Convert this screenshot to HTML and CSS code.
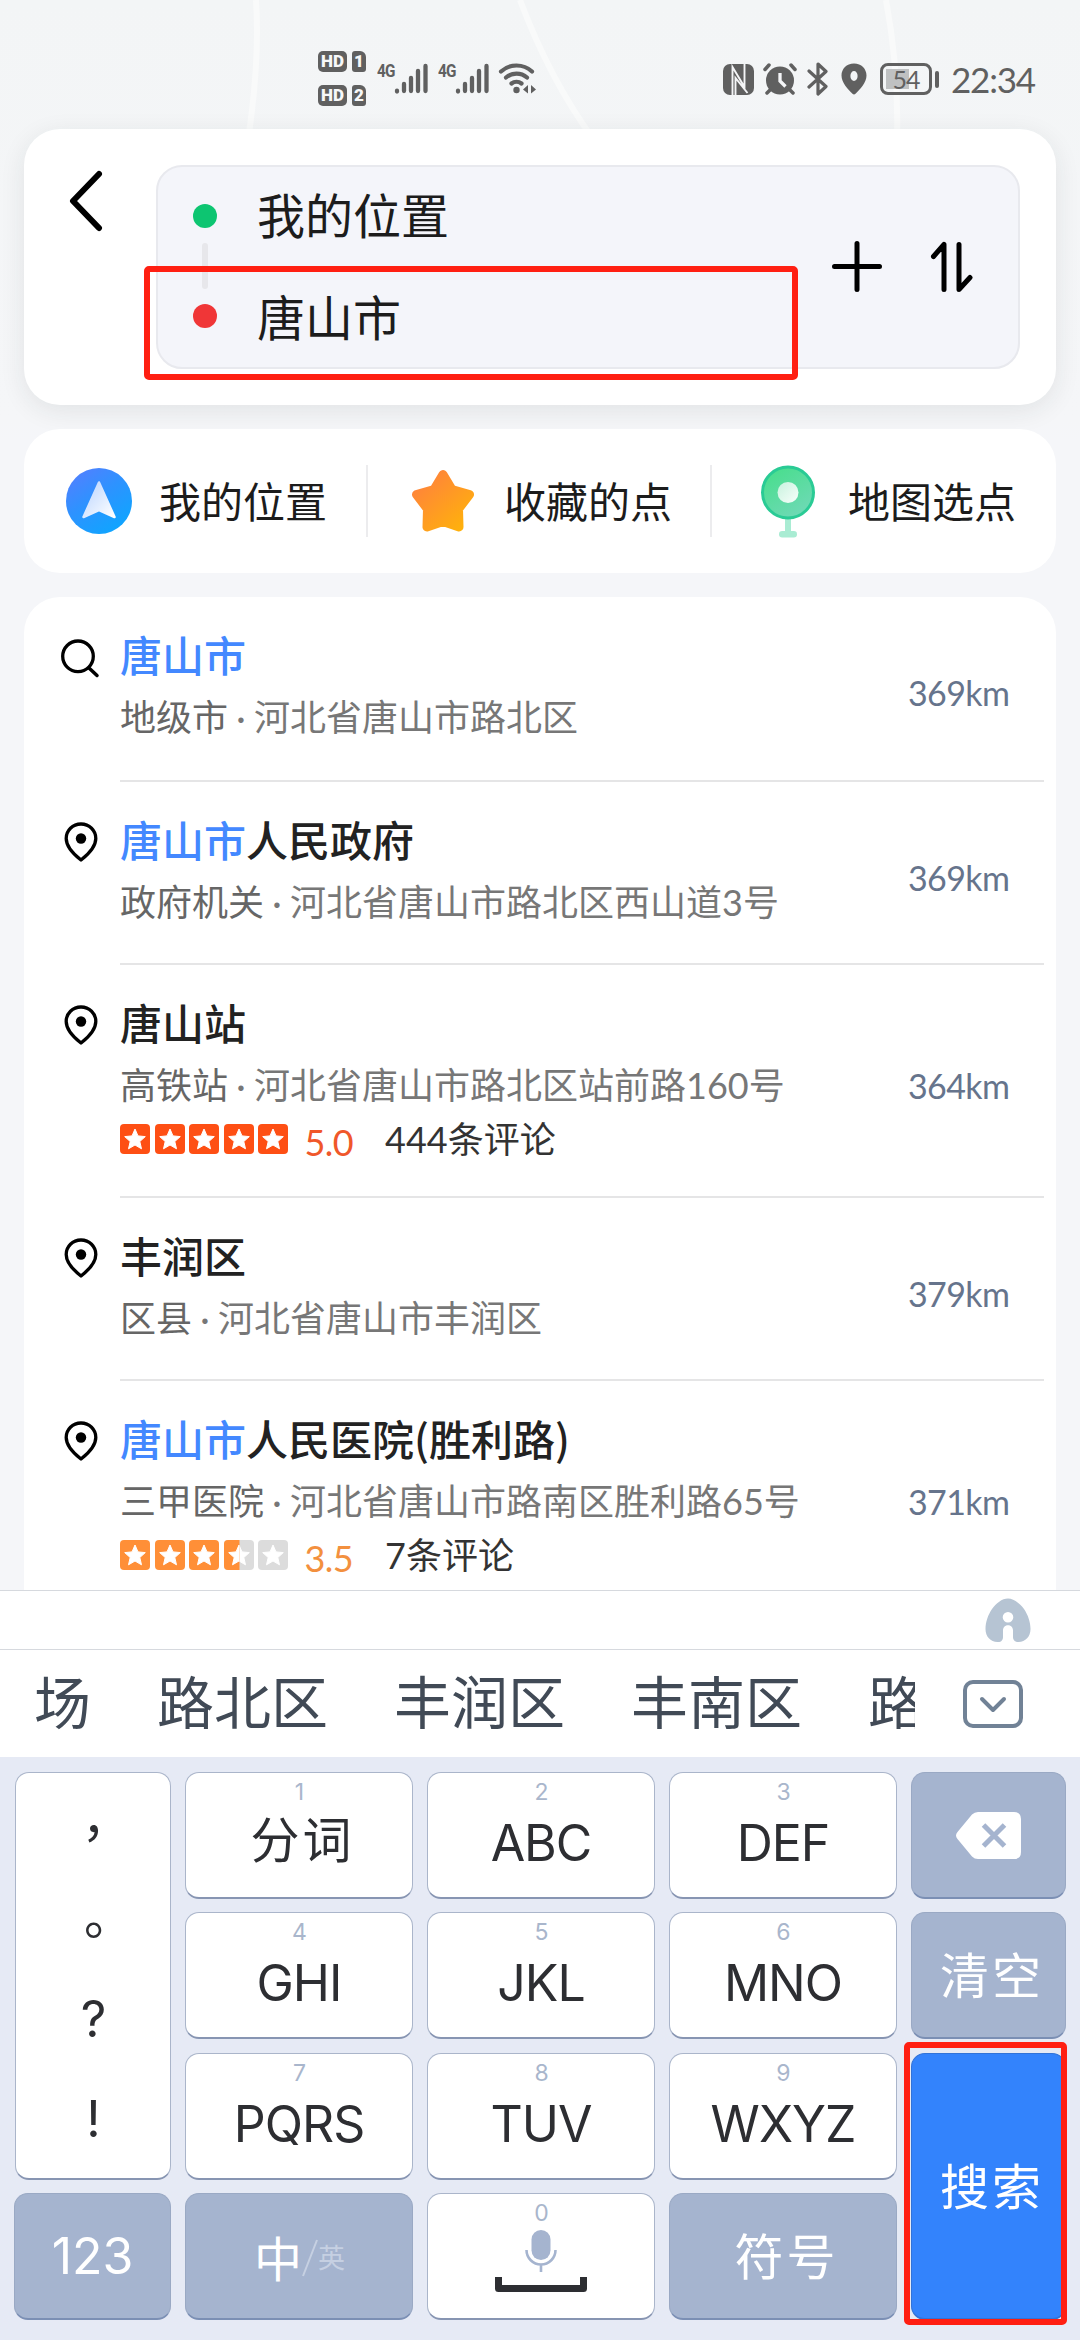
FILE: index.html
```html
<!DOCTYPE html>
<html lang="zh-CN">
<head>
<meta charset="utf-8">
<title>路线搜索</title>
<link rel="stylesheet" href="styles.css">
</head>
<body>
<svg class="defs" width="0" height="0" aria-hidden="true">
  <defs>
    <linearGradient id="gBlue" x1="0" y1="0" x2="0.7" y2="1"><stop offset="0" stop-color="#5a7cff"/><stop offset="0.5" stop-color="#2e92ff"/><stop offset="1" stop-color="#0fa5ff"/></linearGradient>
    <linearGradient id="gArrow" x1="0" y1="0" x2="1" y2="1"><stop offset="0" stop-color="#b9d4ff"/><stop offset="1" stop-color="#ffffff"/></linearGradient>
    <linearGradient id="gStar" x1="0" y1="0" x2="0.9" y2="1"><stop offset="0.1" stop-color="#ff843a"/><stop offset="1" stop-color="#ffb10c"/></linearGradient>
    <linearGradient id="gGreen" x1="0.2" y1="0" x2="0.8" y2="1"><stop offset="0" stop-color="#48de8c"/><stop offset="1" stop-color="#71d9b8"/></linearGradient>
    <linearGradient id="gDot" x1="0" y1="0" x2="1" y2="1"><stop offset="0" stop-color="#c8f2de"/><stop offset="1" stop-color="#f8fffb"/></linearGradient>
    <symbol id="pin" viewBox="0 0 34 40"><path d="M17 2C8.6 2 2.2 8.4 2.2 16.4 2.2 25 9.400 32 17 38c7.600-6 14.800-13 14.800-21.600C31.800 8.400 25.400 2 17 2z" fill="none" stroke="#000" stroke-width="3.300" stroke-linejoin="round"/><circle cx="17" cy="16.500" r="5.200"/></symbol>
    <symbol id="star" viewBox="0 0 30 30"><rect width="30" height="30" rx="4" fill="currentColor"/><path d="M15 5l3 6.900 7.300.7-5.500 4.900 1.700 7.300L15 21l-6.500 3.800 1.700-7.300-5.500-4.900 7.300-.7z" fill="#fff" stroke="#fff" stroke-width="1" stroke-linejoin="round"/></symbol>
    <symbol id="signal" viewBox="0 0 34 32"><path d="M3 29.500v-.8M10 29v-7M17 29v-13M24 29v-20M31.500 29V4" stroke="#606060" stroke-width="4.300" stroke-linecap="round"/></symbol>
  </defs>
</svg>

<div class="screen">
  <svg class="map" width="1080" height="440" viewBox="0 0 1080 440" fill="none" stroke="#f9fafa" stroke-width="6" aria-hidden="true"><path d="M256 0Q260 60 248 140M520 0Q550 80 594 140M886 0Q899 70 897 140"/></svg>

  <header class="status">
    <div class="sims">
      <div class="sim"><b class="hd">HD</b><b class="slot">1</b></div>
      <div class="sim"><b class="hd">HD</b><b class="slot">2</b></div>
    </div>
    <div class="net net-a"><span>4G</span><svg width="34" height="32"><use href="#signal"/></svg></div>
    <div class="net"><span>4G</span><svg width="34" height="32"><use href="#signal"/></svg></div>
    <svg class="wifi" width="40" height="32" viewBox="0 0 40 32"><g fill="none" stroke="#606060" stroke-width="4.200" stroke-linecap="round"><path d="M3 9.500a23 23 0 0 1 31 0M8 15.500a16 16 0 0 1 21 0M13.500 21.500a8 8 0 0 1 10 0"/></g><circle cx="18.500" cy="28" r="3.200" fill="#606060"/><path d="M30 23v8.500l-5-4zM33 23v8.500l5-4z" fill="#606060"/></svg>
    <div class="status-right">
      <svg width="31" height="31" viewBox="0 0 31 31"><rect width="31" height="31" rx="7" fill="#606060"/><path d="M9.500 31V3l12 20V0M12.500 31V14l12 15" fill="none" stroke="#f4f5f7" stroke-width="1.900"/></svg>
      <svg class="alarm" width="34" height="32" viewBox="0 0 34 32"><circle cx="17" cy="17.500" r="14" fill="#606060"/><path d="M2 6.500l4-4.500M32 6.500L28 2M7 27l-3 3M27 27l3 3" stroke="#606060" stroke-width="3.500" stroke-linecap="round"/><path d="M17 10v8l5.500 5.500" fill="none" stroke="#f4f5f7" stroke-width="3.300"/></svg>
      <svg class="bt" width="22" height="34" viewBox="0 0 22 34"><path d="M2 9l17 15.500-8 7.500V2l8 7.500L2 25" fill="none" stroke="#606060" stroke-width="3.200" stroke-linejoin="round" stroke-linecap="round"/></svg>
      <svg class="loc" width="26" height="32" viewBox="0 0 26 32"><path fill-rule="evenodd" d="M13 0.500C5.500.5.500 6 .5 12.500.500 20 7 26 11.500 30.800q1.500 1.500 3 0C19 26 25.500 20 25.500 12.500 25.500 6 20.500.5 13 .5zm0 7.500a3.600 5 0 1 1 0 10 3.600 5 0 1 1 0-10z" fill="#606060"/></svg>
      <div class="battery"><span>54</span></div><i class="battery-cap"></i>
      <time>22:34</time>
    </div>
  </header>

  <section class="route">
    <svg class="back" width="34" height="62" viewBox="0 0 34 62"><path d="M30 4L4 31l26 27" fill="none" stroke="#000" stroke-width="6" stroke-linecap="round" stroke-linejoin="round"/></svg>
    <div class="route-box">
      <div class="marks"><i class="dot start"></i><i class="link"></i><i class="dot end"></i></div>
      <div class="places"><p>我的位置</p><p>唐山市</p></div>
      <svg class="plus" width="50" height="51" viewBox="0 0 50 51"><path d="M25 2.500v46M2.500 25.500h45" stroke="#000" stroke-width="5" stroke-linecap="round"/></svg>
      <svg class="swap" width="44" height="52" viewBox="0 0 44 52"><path d="M3.500 15.500L14 3.500v45M29 3.500v45l11-12" fill="none" stroke="#000" stroke-width="5" stroke-linecap="round" stroke-linejoin="round"/></svg>
    </div>
    <i class="mark mark-place"></i>
  </section>

  <nav class="quick">
    <a class="q-me"><svg width="66" height="66" viewBox="0 0 66 66"><circle cx="33" cy="33" r="33" fill="url(#gBlue)"/><path d="M33 14.500L48.500 49 33 42 17.500 49z" fill="url(#gArrow)" stroke="url(#gArrow)" stroke-width="2.500" stroke-linejoin="round"/></svg><span>我的位置</span></a>
    <a class="q-fav"><svg width="66" height="66" viewBox="0 0 66 66"><path d="M33 6.500L42 21.500 59.500 26.500 48.500 41 49 59 33 53.500 17 59 17.500 41 6.500 26.500 24 21.500z" fill="url(#gStar)" stroke="url(#gStar)" stroke-width="9" stroke-linejoin="round"/></svg><span>收藏的点</span></a>
    <a class="q-map"><svg width="56" height="74" viewBox="0 0 56 74"><path d="M28 52v18" stroke="#a9ecd3" stroke-width="6"/><rect x="19" y="67" width="18" height="6.500" rx="3.200" fill="#a9ecd3"/><circle cx="28" cy="28.500" r="25.500" fill="url(#gGreen)" stroke="#2acb95" stroke-width="3"/><circle cx="28" cy="28.500" r="10.500" fill="url(#gDot)"/></svg><span>地图选点</span></a>
  </nav>

  <main class="results">
    <article class="row first">
      <svg class="search" width="40" height="40" viewBox="0 0 40 40"><circle cx="18" cy="18.300" r="15.300" fill="none" stroke="#000" stroke-width="3.300"/><path d="M29 30l8 7.500" stroke="#000" stroke-width="3.500" stroke-linecap="round"/></svg>
      <div class="body"><div class="info"><h2><em>唐山市</em></h2><p class="addr"><b>地级市</b><i>·</i>河北省唐山市路北区</p></div><span class="dist">369km</span></div>
    </article>
    <article class="row">
      <svg class="pin" width="34" height="40"><use href="#pin"/></svg>
      <div class="body"><div class="info"><h2><em>唐山市</em>人民政府</h2><p class="addr"><b>政府机关</b><i>·</i>河北省唐山市路北区西山道3号</p></div><span class="dist">369km</span></div>
    </article>
    <article class="row">
      <svg class="pin" width="34" height="40"><use href="#pin"/></svg>
      <div class="body"><div class="info"><h2>唐山站</h2><p class="addr"><b>高铁站</b><i>·</i>河北省唐山市路北区站前路160号</p>
        <div class="rating top"><svg><use href="#star"/></svg><svg><use href="#star"/></svg><svg><use href="#star"/></svg><svg><use href="#star"/></svg><svg><use href="#star"/></svg><strong>5.0</strong><span>444条评论</span></div></div><span class="dist">364km</span></div>
    </article>
    <article class="row">
      <svg class="pin" width="34" height="40"><use href="#pin"/></svg>
      <div class="body"><div class="info"><h2>丰润区</h2><p class="addr"><b>区县</b><i>·</i>河北省唐山市丰润区</p></div><span class="dist">379km</span></div>
    </article>
    <article class="row">
      <svg class="pin" width="34" height="40"><use href="#pin"/></svg>
      <div class="body"><div class="info"><h2><em>唐山市</em>人民医院(胜利路)</h2><p class="addr"><b>三甲医院</b><i>·</i>河北省唐山市路南区胜利路65号</p>
        <div class="rating mid"><svg><use href="#star"/></svg><svg><use href="#star"/></svg><svg><use href="#star"/></svg><span class="half"><svg class="off"><use href="#star"/></svg><svg class="on"><use href="#star"/></svg></span><svg class="off"><use href="#star"/></svg><strong>3.5</strong><span>7条评论</span></div></div><span class="dist">371km</span></div>
    </article>
  </main>

  <section class="ime">
    <div class="toolbar"><svg width="46" height="45" viewBox="0 0 46 45"><path fill-rule="evenodd" d="M23 .5C17 .5 11 5.500 7 11 3 17 .5 24 .5 31c0 8 5 12.500 12 13 4 .2 5.500-2 5.500-5v-6.500c0-7 10-7 10 0V39c0 3 2 5.200 5.500 5 7-.5 12-5 12-13 0-7-2.500-14-6.500-20C35 5.500 29 .5 23 .5zM23 14a5.300 5.300 0 1 1 0 10.600A5.300 5.300 0 0 1 23 14z" fill="#b6c4d3"/></svg></div>
    <div class="candidates">
      <div class="words"><span>场</span><span>路北区</span><span>丰润区</span><span>丰南区</span><span>路</span></div>
      <svg width="60" height="48" viewBox="0 0 60 48" fill="none" stroke="#718296" stroke-width="4"><rect x="2" y="2" width="56" height="44" rx="8"/><path d="M19 19l11 11 11-11" stroke-linecap="round" stroke-linejoin="round"/></svg>
    </div>
    <div class="keys">
      <div class="key punct"><span class="cn">，</span><span class="cn">。</span><span>?</span><span>!</span></div>
      <div class="key"><small>1</small><span class="cjk">分词</span></div>
      <div class="key"><small>2</small><span>ABC</span></div>
      <div class="key"><small>3</small><span>DEF</span></div>
      <div class="key fn"><svg class="del" width="66" height="47" viewBox="0 0 66 47"><path d="M22 0h36q7 0 7 7v33q0 7-7 7H22q-3.500 0-6-2.500L1.500 27q-3-3.500 0-7L16 2.500Q18.500 0 22 0z" fill="#fff"/><path d="M27.500 13l21 21M48.500 13l-21 21" stroke="#a5b4cf" stroke-width="5"/></svg></div>
      <div class="key"><small>4</small><span>GHI</span></div>
      <div class="key"><small>5</small><span>JKL</span></div>
      <div class="key"><small>6</small><span>MNO</span></div>
      <div class="key fn"><span class="cjk">清空</span></div>
      <div class="key"><small>7</small><span>PQRS</span></div>
      <div class="key"><small>8</small><span>TUV</span></div>
      <div class="key"><small>9</small><span>WXYZ</span></div>
      <div class="key go"><span class="cjk">搜索</span><i class="mark mark-go"></i></div>
      <div class="key fn"><span class="num">123</span></div>
      <div class="key fn lang"><span class="cjk">中</span><svg width="16" height="38" viewBox="0 0 16 38"><path d="M1 37L15 1" stroke="#c6d0e2" stroke-width="2"/></svg><span class="alt">英</span></div>
      <div class="key space"><small>0</small><svg width="92" height="64" viewBox="0 0 92 64"><rect x="36.500" y="0" width="19" height="30" rx="9.500" fill="#a5b4cf"/><path d="M31.500 20a14.500 14.500 0 0 0 29 0M46 34v8" fill="none" stroke="#a5b4cf" stroke-width="2.600"/><path d="M3.500 47v11.500h85V47" fill="none" stroke="#2d2e32" stroke-width="7" stroke-linejoin="round"/></svg></div>
      <div class="key fn"><span class="cjk">符号</span></div>
    </div>
  </section>
</div>
</body>
</html>
```
FILE: styles.css
```css
* { box-sizing: border-box; }
body, p, h2 { margin: 0; }
body { font-family: "Noto Sans CJK SC", sans-serif; color: #1c1c1c; }
i, em { font-style: normal; }
svg { display: block; flex: none; }
.defs { position: absolute; }

.screen {
  position: relative;
  width: 1080px; height: 2340px;
  overflow: hidden;
  display: flex; flex-direction: column;
  background: linear-gradient(#f3f5f6, #f5f6f8 420px, #f5f6f9 440px);
}
.map { position: absolute; left: 0; top: 0; }

/* status bar */
.status { position: relative; flex: none; height: 129px; padding: 51px 45px 0 318px; display: flex; align-items: flex-start; color: #606060; }
.sims { display: flex; flex-direction: column; gap: 13px; width: 49px; }
.sim { display: flex; gap: 5px; font: 700 17px/21px "Roboto", sans-serif; color: #f7f8f9; }
.hd { width: 29px; height: 21px; border-radius: 5px; background: #606060; text-align: center; }
.slot { width: 14px; height: 21px; border-radius: 3px 6px 3px 3px; background: #606060; text-align: center; }
.net { display: flex; margin: 11px 0 0 10px; width: 51px; }
.net span { width: 17px; font: 700 18px/18px "Roboto", sans-serif; letter-spacing: -1px; transform: scaleX(.85); transform-origin: left; }
.wifi { margin: 11px 0 0 9px; }
.status-right { margin: 11px 0 0 auto; display: flex; align-items: center; }
.alarm { margin-left: 9px; }
.bt { margin-left: 10px; }
.loc { margin-left: 12px; }
.battery { margin-left: 13px; width: 52px; height: 32px; border: 3px solid #606060; border-radius: 8px; background: linear-gradient(90deg, #bfc1c2 52%, transparent 52%) 3px 3px / 44px 20px no-repeat; font: 400 25px/26px "Lato", sans-serif; text-align: center; letter-spacing: -1px; }
.battery-cap { width: 4px; height: 17px; margin: 0 0 0 3px; border-radius: 2px; background: #606060; }
.status time { margin-left: 12px; width: 84px; white-space: nowrap; font: 400 35px/32px "Lato", sans-serif; letter-spacing: -1.200px; }

/* route card */
.route { position: relative; flex: none; height: 276px; margin: 0 24px; padding: 36px; border-radius: 36px; background: #fff; box-shadow: 0 6px 26px rgba(30, 40, 40, .09); display: flex; }
.back { margin: 5px 0 0 9px; }
.route-box { margin-left: 53px; width: 864px; height: 204px; border: 2px solid #e8e9ee; border-radius: 26px; background: #f4f5fa; display: flex; }
.marks { width: 24px; margin: 37px 0 0 35px; display: flex; flex-direction: column; align-items: center; }
.dot { width: 24px; height: 24px; border-radius: 50%; }
.start { background: #0dc571; }
.end { background: #f03637; }
.link { width: 6px; height: 46px; margin: 15px 0 15px; border-radius: 3px; background: #e7e7eb; }
.places { width: 573px; padding: 0 0 0 40px; }
.places p { height: 102px; font-size: 48px; line-height: 102px; margin-top: -5px; }
.places p + p { margin-top: 0; }
.plus { margin: 74px 0 0 42px; }
.swap { margin: 74px 0 0 48px; }
.mark { position: absolute; border: 6px solid #ff1f12; border-radius: 5px; }
.mark-place { left: 120px; top: 137px; width: 654px; height: 114px; }

/* shortcuts */
.quick { flex: none; height: 144px; margin: 24px 24px 0; border-radius: 36px; background: #fff; display: flex; position: relative; }
.quick a { flex: 1; display: flex; align-items: center; font-size: 42px; line-height: 60px; background: linear-gradient(#ececee, #ececee) right center / 2px 72px no-repeat; }
.quick a:last-child { background: none; }
.quick span { position: relative; top: -1px; }
.q-me svg { margin: 0 27px 0 42px; }
.q-fav svg { margin: 0 28px 0 42px; }
.q-map svg { margin: 0 32px 0 48px; }

/* result list */
.results { flex: none; height: 993px; margin: 24px 24px 0; border-radius: 36px 36px 0 0; background: #fff; overflow: hidden; }
.row { display: flex; padding-right: 12px; }
.row > svg { margin: 40px 0 0 40px; }
.row > .search { margin: 41px 0 0 36px; }
.row > .search + .body { margin-left: 20px; padding: 28px 0 34px; height: 185px; }
.body { flex: 1; margin-left: 22px; border-bottom: 2px solid #e5e5e6; display: flex; padding: 27px 0 31px; white-space: nowrap; align-items: center; }
.info { flex: 1; }
h2 { font-size: 42px; line-height: 60px; font-weight: 500; color: #222; }
h2 em { color: #4388ff; }
.addr { font-family: "Lato", "Noto Sans CJK SC", sans-serif; font-size: 36px; line-height: 60px; margin-top: 3px; color: #777; }
.addr b { font-weight: 400; color: #666; }
.addr i { display: inline-block; width: 26px; text-align: center; }
.dist { font: 400 34px/40px "Lato", sans-serif; letter-spacing: -.6px; color: #66748c; width: 102px; margin-right: 34px; position: relative; top: 7px; }
.rating { display: flex; gap: 4.500px; height: 30px; margin: 9px 0 11px; align-items: center; color: #fe4f14; }
.rating svg { width: 30px; height: 30px; }
.rating strong { font: 400 36px/30px "Lato", sans-serif; letter-spacing: -.6px; margin-left: 12px; width: 76px; color: #f0572a; position: relative; top: 3px; }
.rating > span:last-child { font: 400 36px/30px "Lato", "Noto Sans CJK SC", sans-serif; color: #333; }
.mid { color: #ff8f37; }
.mid strong { color: #f3903e; }
.rating .off { color: #dcdcdc; }
.half { position: relative; width: 30px; height: 30px; }
.half .on { position: absolute; left: 0; top: 0; clip-path: inset(0 14px 0 0); }

/* input method */
.ime { flex: none; height: 750px; background: #e6eaf5; position: relative; }
.toolbar { height: 59px; background: #fff; border-top: 1px solid #d6d9de; display: flex; justify-content: flex-end; padding: 7px 49px 0 0; }
.candidates { height: 108px; background: #fff; border-top: 1px solid #d6d9de; display: flex; align-items: center; justify-content: space-between; padding: 0 57px 0 34px; }
.words { width: 881px; overflow: hidden; display: flex; gap: 66px; font-size: 57px; line-height: 90px; white-space: nowrap; color: #414a56; margin-top: -10px; }
.keys { display: grid; grid-template-columns: 157px repeat(3, 228px) 155px; grid-template-rows: repeat(4, 127px); gap: 13.300px 14px; padding: 15px 14px; }
.key { position: relative; border-radius: 14px; background: #fff; border: 1px solid #aab5ca; border-bottom: 2px solid #8795b2; display: flex; flex-direction: column; align-items: center; color: #2d2e32; font: 400 50px/60px "Inter", sans-serif; letter-spacing: -1px; }
.key small { font: 400 23px/24px "Inter", sans-serif; color: #a9b6cc; margin: 7px 0 9px; }
.key .cjk { font: 400 49px/52px "Noto Sans CJK SC", sans-serif; letter-spacing: 3px; margin-right: -7px; position: relative; top: -2px; }
.fn, .go { background: #a5b4cf; border-color: #9aa9c4; border-bottom-color: #7b8fb4; color: #fff; justify-content: center; }
.go { grid-row: span 2; background: #3383fc; border-color: #3173d8; }
.punct { grid-row: span 3; margin-left: 1px; padding-top: 27px; }
.punct .cn { font: 400 50px/60px "Noto Sans CJK TC", sans-serif; height: 97px; }
.punct .cn + .cn { height: 92px; }
.punct span:nth-child(3) { height: 100px; }
.num { letter-spacing: 0; }
.lang { flex-direction: row; align-items: center; }
.key.lang .cjk { letter-spacing: 0; margin: 0; font-size: 48px; top: 0; }
.lang svg { margin-top: 4px; }
.alt { font: 400 27px/40px "Noto Sans CJK SC", sans-serif; color: #c6d0e2; margin-top: 3px; }
.space small { margin-bottom: 4px; }
.space svg { margin-top: 1px; }
.mark-go { left: -8px; top: -12px; width: 163px; height: 283px; }
```
